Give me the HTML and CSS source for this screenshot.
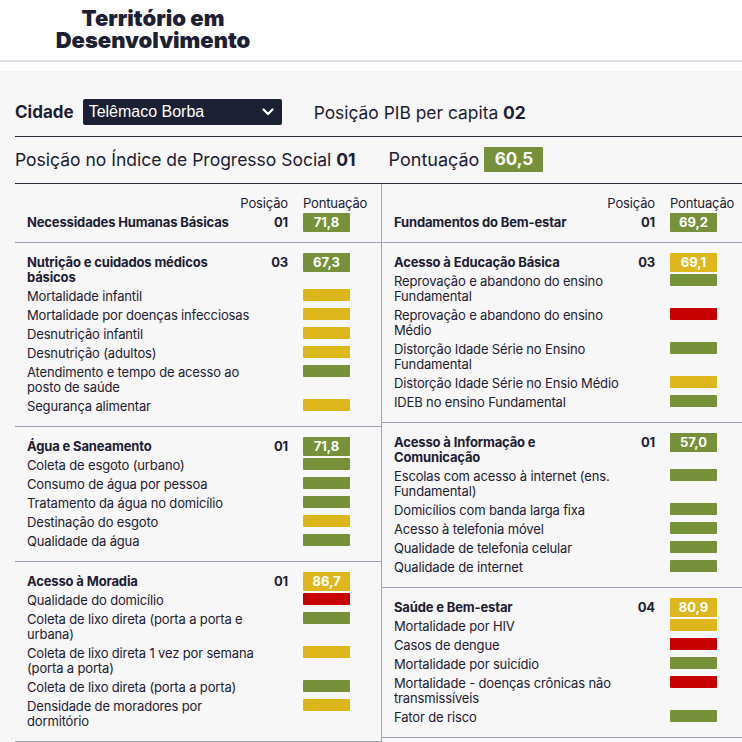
FILE: index.html
```html
<!DOCTYPE html>
<html lang="pt-BR">
<head>
<meta charset="utf-8">
<title>Território em Desenvolvimento</title>
<link rel="stylesheet" href="styles.css">
</head>
<body>
<header class="topbar">
  <div class="brand-box">
    <h1 class="brand">Território em<br>Desenvolvimento</h1>
  </div>
</header>
<main class="page">
  <div class="city-row">
    <span class="city-label">Cidade</span>
    <div class="select">
      <span>Telêmaco Borba</span>
      <svg class="chev" width="12" height="8" viewBox="0 0 12 8"><path d="M1.5 1.5 L6 6 L10.5 1.5" fill="none" stroke="#fff" stroke-width="2.2" stroke-linecap="round" stroke-linejoin="round"/></svg>
    </div>
    <span class="pib">Posição PIB per capita <b>02</b></span>
  </div>
  <div class="ips-row">
    <span class="ips">Posição no Índice de Progresso Social <b>01</b></span>
    <span class="ips-score-label">Pontuação</span>
    <span class="big-score">60,5</span>
  </div>
  <div class="cols">
    <section class="col col-left">
      <div class="tbl head">
        <span class="lbl">Posição</span><span class="lbl-score">Pontuação</span>
        <span class="name">Necessidades Humanas Básicas</span><span class="pos">01</span><span class="score g">71,8</span>
      </div>
      <div class="tbl">
        <span class="name">Nutrição e cuidados médicos básicos</span><span class="pos">03</span><span class="score g">67,3</span>
        <span class="item">Mortalidade infantil</span><span class="bar y"></span>
        <span class="item">Mortalidade por doenças infecciosas</span><span class="bar y"></span>
        <span class="item">Desnutrição infantil</span><span class="bar y"></span>
        <span class="item">Desnutrição (adultos)</span><span class="bar y"></span>
        <span class="item">Atendimento e tempo de acesso ao posto de saúde</span><span class="bar g"></span>
        <span class="item">Segurança alimentar</span><span class="bar y"></span>
      </div>
      <div class="tbl">
        <span class="name">Água e Saneamento</span><span class="pos">01</span><span class="score g">71,8</span>
        <span class="item">Coleta de esgoto (urbano)</span><span class="bar g"></span>
        <span class="item">Consumo de água por pessoa</span><span class="bar g"></span>
        <span class="item">Tratamento da água no domicílio</span><span class="bar g"></span>
        <span class="item">Destinação do esgoto</span><span class="bar y"></span>
        <span class="item">Qualidade da água</span><span class="bar g"></span>
      </div>
      <div class="tbl">
        <span class="name">Acesso à Moradia</span><span class="pos">01</span><span class="score y">86,7</span>
        <span class="item">Qualidade do domicílio</span><span class="bar r"></span>
        <span class="item">Coleta de lixo direta (porta a porta e urbana)</span><span class="bar g"></span>
        <span class="item">Coleta de lixo direta 1 vez por semana (porta a porta)</span><span class="bar y"></span>
        <span class="item">Coleta de lixo direta (porta a porta)</span><span class="bar g"></span>
        <span class="item">Densidade de moradores por dormitório</span><span class="bar y"></span>
      </div>
    </section>
    <section class="col col-right">
      <div class="tbl head">
        <span class="lbl">Posição</span><span class="lbl-score">Pontuação</span>
        <span class="name">Fundamentos do Bem-estar</span><span class="pos">01</span><span class="score g">69,2</span>
      </div>
      <div class="tbl">
        <span class="name">Acesso à Educação Básica</span><span class="pos">03</span><span class="score y">69,1</span>
        <span class="item">Reprovação e abandono do ensino Fundamental</span><span class="bar g"></span>
        <span class="item">Reprovação e abandono do ensino Médio</span><span class="bar r"></span>
        <span class="item">Distorção Idade Série no Ensino Fundamental</span><span class="bar g"></span>
        <span class="item">Distorção Idade Série no Ensio Médio</span><span class="bar y"></span>
        <span class="item">IDEB no ensino Fundamental</span><span class="bar g"></span>
      </div>
      <div class="tbl">
        <span class="name">Acesso à Informação e Comunicação</span><span class="pos">01</span><span class="score g">57,0</span>
        <span class="item">Escolas com acesso à internet (ens. Fundamental)</span><span class="bar g"></span>
        <span class="item">Domicílios com banda larga fixa</span><span class="bar g"></span>
        <span class="item">Acesso à telefonia móvel</span><span class="bar g"></span>
        <span class="item">Qualidade de telefonia celular</span><span class="bar g"></span>
        <span class="item">Qualidade de internet</span><span class="bar g"></span>
      </div>
      <div class="tbl">
        <span class="name">Saúde e Bem-estar</span><span class="pos">04</span><span class="score y">80,9</span>
        <span class="item">Mortalidade por HIV</span><span class="bar y"></span>
        <span class="item">Casos de dengue</span><span class="bar r"></span>
        <span class="item">Mortalidade por suicídio</span><span class="bar g"></span>
        <span class="item">Mortalidade - doenças crônicas não transmissíveis</span><span class="bar r"></span>
        <span class="item">Fator de risco</span><span class="bar g"></span>
      </div>
    </section>
  </div>
</main>
</body>
</html>
```

FILE: styles.css
```css
* { box-sizing: border-box; }
html, body { margin: 0; padding: 0; }
body {
  background: #fff;
  color: #1d2033;
  font-family: Inter, "Noto Sans", sans-serif;
}
.topbar {
  background: #fff;
  padding-bottom: 9px;
}
.brand-box {
  height: 62px;
  border-bottom: 2px solid #dde1e7;
  padding-left: 55px;
  padding-top: 7px;
}
.brand {
  display: inline-block;
  margin: 0;
  width: 196px;
  text-align: center;
  font-size: 22px;
  line-height: 22px;
  font-weight: 900;
  color: #1d2033;
}
.page {
  background: #f7f7f7;
  padding-left: 15px;
  min-height: 700px;
}
.city-row {
  display: flex;
  align-items: center;
  padding: 28px 0 11px;
  border-bottom: 1px solid #2b2e3a;
}
.city-label {
  font-size: 17px;
  font-weight: 700;
  margin-right: 9px;
}
.select {
  width: 199px;
  height: 26px;
  background: #1b2033;
  border-radius: 2px;
  color: #fff;
  display: flex;
  align-items: center;
  justify-content: space-between;
  padding: 0 8px 0 6px;
  font-family: "Liberation Sans", Arial, sans-serif;
  font-size: 16px;
}
.chev { display: block; }
.pib {
  margin-left: 32px;
  font-size: 17.4px;
}
.pib b, .ips b { font-weight: 700; }
.ips-row {
  display: flex;
  align-items: center;
  padding: 10px 0 11px;
  border-bottom: 1px solid #2b2e3a;
}
.ips { font-size: 17.5px; }
.ips-score-label {
  font-size: 18px;
  margin-left: 33px;
}
.big-score {
  margin-left: 5px;
  width: 59px;
  height: 25px;
  line-height: 25px;
  text-align: center;
  background: #77913b;
  color: #fff;
  font-weight: 700;
  font-size: 17px;
  border-radius: 1px;
}
.cols {
  display: flex;
}
.col-left {
  width: 366px;
  flex: none;
}
.col-right {
  flex: 1;
  border-left: 1px solid #9ca3b4;
}
.tbl {
  display: grid;
  grid-template-columns: 230px 31px 62px;
  align-items: start;
  padding: 10px 0 10px 12px;
  border-bottom: 1px solid #9ca3b4;
  font-size: 13px;
  line-height: 15px;
  letter-spacing: -0.15px;
}
.lbl {
  grid-column: 1 / 3;
  text-align: right;
  white-space: nowrap;
  padding: 2px 0;
}
.lbl-score {
  padding: 2px 0 2px 15px;
  white-space: nowrap;
}
.name {
  font-weight: 700;
  padding: 2px 0;
}
.pos {
  font-weight: 700;
  text-align: right;
  padding: 2px 0;
}
.score {
  justify-self: end;
  width: 47px;
  height: 19px;
  line-height: 19px;
  text-align: center;
  color: #fff;
  font-weight: 700;
  border-radius: 1px;
  letter-spacing: 0;
}
.item {
  grid-column: 1 / 3;
  padding: 2px 31px 2px 0;
}
.bar {
  justify-self: end;
  width: 47px;
  height: 12px;
  margin-top: 2px;
  border-radius: 1px;
}
.g { background: #77913b; }
.y { background: #deb71d; }
.r { background: #c80000; }
```
